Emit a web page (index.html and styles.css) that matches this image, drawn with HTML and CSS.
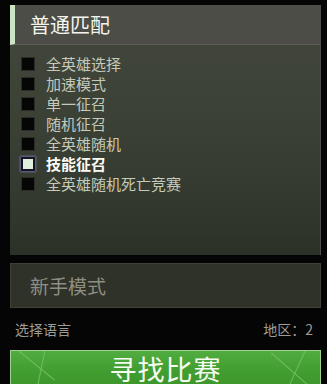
FILE: index.html
```html
<!DOCTYPE html>
<html lang="zh">
<head>
<meta charset="utf-8">
<link rel="stylesheet" href="styles.css">
</head>
<body>
<div class="page">
  <section class="panel">
    <header class="panel-head">普通匹配</header>
    <ul class="modes">
      <li class="mode"><span class="box"></span>全英雄选择</li>
      <li class="mode"><span class="box"></span>加速模式</li>
      <li class="mode"><span class="box"></span>单一征召</li>
      <li class="mode"><span class="box"></span>随机征召</li>
      <li class="mode"><span class="box"></span>全英雄随机</li>
      <li class="mode active"><span class="box"></span>技能征召</li>
      <li class="mode"><span class="box"></span>全英雄随机死亡竞赛</li>
    </ul>
  </section>
  <section class="novice">新手模式</section>
  <div class="footer">
    <span>选择语言</span>
    <span>地区：2</span>
  </div>
  <button class="find">
    <svg class="deco" viewBox="0 0 311 40" preserveAspectRatio="none">
      <line x1="8" y1="0" x2="44" y2="30" />
      <line x1="34" y1="0" x2="26" y2="40" />
      <line x1="296" y1="0" x2="278" y2="40" />
      <line x1="262" y1="2" x2="300" y2="36" />
    </svg>
    <span class="label">寻找比赛</span>
  </button>
</div>
</body>
</html>
```
FILE: styles.css
```css
* { box-sizing: border-box; }
html, body {
  margin: 0;
  padding: 0;
  background: #050506;
  width: 327px;
  height: 384px;
  overflow: hidden;
  font-family: "Noto Sans CJK SC", "Noto Sans", sans-serif;
}
.page {
  display: flex;
  flex-direction: column;
  padding: 5px 6px 0 10px;
}
.panel {
  height: 250px;
  background: linear-gradient(180deg, #43473d 0%, #3d4237 40%, #343a2f 75%, #2c3127 100%);
  border-right: 1px solid #4b4e46;
  display: flex;
  flex-direction: column;
}
.panel-head {
  height: 40px;
  background: #4b4d46;
  border-left: 5px solid #c9e3c3;
  border-bottom: 1px solid #5a5c55;
  color: #f4f4ee;
  font-size: 20px;
  line-height: 40px;
  padding-left: 15px;
}
.modes {
  list-style: none;
  margin: 0;
  padding: 9px 0 0 11px;
}
.mode {
  height: 20px;
  display: flex;
  align-items: center;
  gap: 11px;
  color: #c5cabb;
  font-size: 15px;
  line-height: 20px;
}
.box {
  width: 14px;
  height: 14px;
  background: #060606;
  border: 1px solid #2a2c26;
}
.mode.active {
  color: #fbfbf6;
  font-weight: bold;
}
.mode.active .box {
  background: #dfeedd;
  border: 2px solid #141424;
  box-shadow: 0 0 2px 1px #6c6c9c;
}
.novice {
  margin-top: 8px;
  height: 45px;
  background: #2f3229;
  border: 1px solid #3e4138;
  color: #8f8e82;
  font-size: 19px;
  line-height: 43px;
  padding-left: 19px;
}
.footer {
  height: 42px;
  display: flex;
  justify-content: space-between;
  align-items: center;
  padding: 0 8px 0 5px;
  color: #9d9d97;
  font-size: 14px;
}
.find {
  position: relative;
  height: 40px;
  margin: 0;
  padding: 0;
  border: 1px solid #9fd08f;
  border-bottom: none;
  background: linear-gradient(180deg, #52ad40 0%, #44a032 40%, #3b9429 100%);
  color: #f6fbf2;
  font-family: inherit;
  font-size: 27px;
  overflow: hidden;
  display: flex;
  justify-content: center;
  align-items: flex-start;
}
.find .deco {
  position: absolute;
  inset: 0;
  width: 100%;
  height: 100%;
}
.find .deco line {
  stroke: #7cc56a;
  stroke-width: 1.2;
  opacity: 0.7;
}
.find .label {
  position: relative;
  line-height: 36px;
  letter-spacing: 1px;
}
```
